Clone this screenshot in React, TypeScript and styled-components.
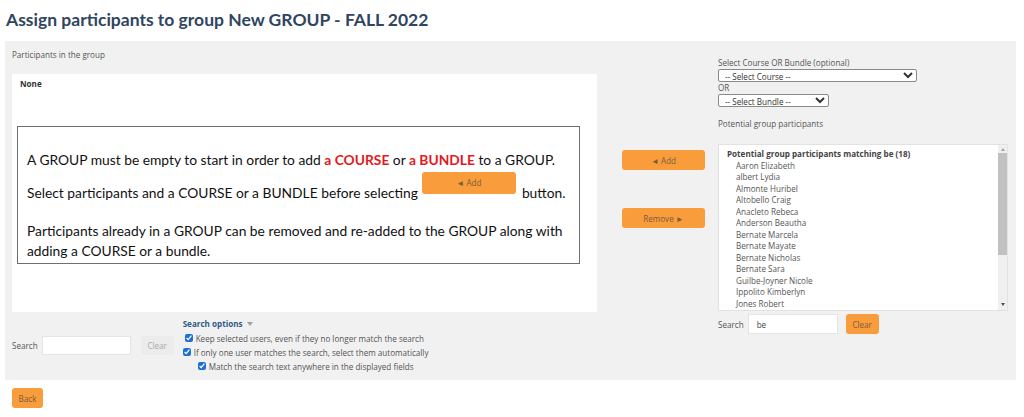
import styled, { createGlobalStyle } from 'styled-components';

const GlobalStyle = createGlobalStyle`
  body {
    margin: 0;
    background: #fff;
    font-family: "Open Sans", "Noto Sans", sans-serif;
    color: #4a4a4a;
  }
  * { box-sizing: border-box; }
`;

const Page = styled.div`
  width: 1024px;
  padding: 9px 8px 0 5px;
`;

const Title = styled.h2`
  margin: 0 0 10px 1px;
  font-family: Lato, "Open Sans", sans-serif;
  font-size: 17.5px;
  line-height: 22px;
  font-weight: 700;
  color: #2f4560;
`;

const Panel = styled.div`
  display: flex;
  align-items: flex-start;
  background: #f1f1f1;
  height: 339px;
  padding: 0 8px 0 7px;
  font-size: 8.1px;
`;

const LeftCol = styled.div`
  width: 585px;
  display: flex;
  flex-direction: column;
`;

const Label = styled.div<{ $top?: number }>`
  line-height: 12px;
  color: #555;
  margin-top: ${(p) => p.$top ?? 0}px;
`;

const WhiteBox = styled.div`
  margin-top: 13px;
  height: 238px;
  background: #fff;
  padding: 4px 8px;
`;

const NoneText = styled.div`
  line-height: 12px;
  font-weight: 700;
  color: #333;
`;

const Notice = styled.div`
  margin: 36px 0 0 -3px;
  width: 563px;
  height: 138px;
  border: 1px solid #6f6f6f;
  padding: 23px 6px 0 9px;
  font-family: Lato, "Open Sans", sans-serif;
  font-size: 13.8px;
  color: #111;
`;

const NoticeLine = styled.p<{ $gap: number }>`
  margin: 0 0 ${(p) => p.$gap}px;
  line-height: 20px;
`;

const Red = styled.strong`
  color: #e3191c;
`;

const OrangeButton = styled.button<{ $w: number; $h?: number }>`
  width: ${(p) => p.$w}px;
  height: ${(p) => p.$h ?? 20}px;
  background: #f99c3b;
  border: none;
  border-radius: 3px;
  color: #7b5c3e;
  font-family: "Open Sans", "Noto Sans", sans-serif;
  font-size: 8.1px;
  padding: 0;
  cursor: pointer;
`;

const InlineButton = styled(OrangeButton)`
  margin: -11px 6px 0 4px;
  vertical-align: top;
  padding-bottom: 2px;
`;

const MiddleCol = styled.div`
  width: 83px;
  margin-left: 25px;
  padding-top: 109px;
  display: flex;
  flex-direction: column;
  gap: 38px;
`;

const RightCol = styled.div`
  width: 290px;
  margin-left: 13px;
  padding-top: 16px;
  display: flex;
  flex-direction: column;
  align-items: flex-start;
`;

const Select = styled.select<{ $w: number }>`
  width: ${(p) => p.$w}px;
  height: 13px;
  font-family: "Open Sans", "Noto Sans", sans-serif;
  font-size: 8.1px;
  color: #333;
  border: 1px solid #8a8a8a;
  border-radius: 2px;
  background: #fff;
  padding: 0 2px;
`;

const ListBox = styled.div`
  margin-top: 14px;
  width: 290px;
  height: 167px;
  background: #fff;
  border: 1px solid #e2e2e2;
  display: flex;
`;

const ListContent = styled.div`
  flex: 1;
  overflow: hidden;
  padding: 3px 8px;
`;

const ScrollTrack = styled.div`
  width: 9px;
  background: #f0f0f0;
  display: flex;
  flex-direction: column;
  align-items: center;
`;

const ScrollArrow = styled.div<{ $down?: boolean }>`
  width: 0;
  height: 0;
  margin: ${(p) => (p.$down ? 'auto 0 4px' : '3px 0 2px')};
  border-left: 2.5px solid transparent;
  border-right: 2.5px solid transparent;
  ${(p) =>
    p.$down ? 'border-top: 3px solid #505050;' : 'border-bottom: 3px solid #a3a3a3;'}
`;

const ScrollThumb = styled.div`
  width: 9px;
  height: 102px;
  background: #c1c1c1;
`;

const GroupHead = styled.div`
  line-height: 11.5px;
  font-weight: 700;
  color: #444;
`;

const Option = styled.div`
  line-height: 11.5px;
  color: #555;
  padding-left: 9px;
`;

const SearchRow = styled.div<{ $top: number }>`
  display: flex;
  align-items: center;
  margin-top: ${(p) => p.$top}px;
  color: #555;
`;

const SearchInput = styled.input<{ $w: number; $h: number }>`
  width: ${(p) => p.$w}px;
  height: ${(p) => p.$h}px;
  margin-left: 4px;
  border: 1px solid #e4e4e4;
  background: #fff;
  font-family: "Open Sans", "Noto Sans", sans-serif;
  font-size: 8.1px;
  color: #444;
  padding: 0 8px;
  outline: none;
`;

const GreyButton = styled.button`
  width: 33px;
  height: 19px;
  margin-left: 10px;
  background: #ececec;
  border: none;
  border-radius: 2px;
  color: #aaa;
  font-family: "Open Sans", "Noto Sans", sans-serif;
  font-size: 8.1px;
  padding: 0;
`;

const Options = styled.div`
  margin-left: 9px;
  display: flex;
  flex-direction: column;
`;

const OptionsLink = styled.div`
  font-weight: 700;
  color: #2f5b87;
  line-height: 12px;
  margin-bottom: 1px;
`;

const Caret = styled.span`
  display: inline-block;
  margin-left: 4px;
  border-left: 3.5px solid transparent;
  border-right: 3.5px solid transparent;
  border-top: 4px solid #9aa0a6;
  vertical-align: 1px;
`;

const CheckRow = styled.label<{ $indent: number }>`
  display: flex;
  align-items: center;
  height: 14px;
  padding-left: ${(p) => p.$indent}px;
  color: #555;
`;

const Check = styled.input`
  width: 8px;
  height: 8px;
  margin: 0 3px 0 0;
  accent-color: #1f6fd1;
`;

const BackButton = styled(OrangeButton)`
  margin: 8px 0 0 7px;
`;

const ClearButton = styled(OrangeButton)`
  margin-left: 8px;
`;

const people = [
  'Aaron Elizabeth',
  'albert Lydia',
  'Almonte Huribel',
  'Altobello Craig',
  'Anacleto Rebeca',
  'Anderson Beautha',
  'Bernate Marcela',
  'Bernate Mayate',
  'Bernate Nicholas',
  'Bernate Sara',
  'Guilbe-Joyner Nicole',
  'Ippolito Kimberlyn',
  'Jones Robert',
  'Jordan Christina',
  'Lambert Nicole',
  'Roberts Bethany',
  'Robertson Daniel',
  'Webber Ashley',
];

const searchOptions = [
  { text: 'Keep selected users, even if they no longer match the search', indent: 2 },
  { text: 'If only one user matches the search, select them automatically', indent: 0 },
  { text: 'Match the search text anywhere in the displayed fields', indent: 15 },
];

export default function App() {
  return (
    <>
      <GlobalStyle />
      <Page>
        <Title>Assign participants to group New GROUP - FALL 2022</Title>
        <Panel>
          <LeftCol>
            <Label $top={8}>Participants in the group</Label>
            <WhiteBox>
              <NoneText>None</NoneText>
              <Notice>
                <NoticeLine $gap={13}>
                  A GROUP must be empty to start in order to add <Red>a COURSE</Red> or{' '}
                  <Red>a BUNDLE</Red> to a GROUP.
                </NoticeLine>
                <NoticeLine $gap={18}>
                  Select participants and a COURSE or a BUNDLE before selecting
                  <InlineButton $w={94} $h={22}>◄ Add</InlineButton>
                  button.
                </NoticeLine>
                <NoticeLine $gap={0}>
                  Participants already in a GROUP can be removed and re-added to the GROUP along
                  with adding a COURSE or a bundle.
                </NoticeLine>
              </Notice>
            </WhiteBox>
            <SearchRow $top={6}>
              Search
              <SearchInput $w={89} $h={19} />
              <GreyButton>Clear</GreyButton>
              <Options>
                <OptionsLink>
                  Search options
                  <Caret />
                </OptionsLink>
                {searchOptions.map((o) => (
                  <CheckRow key={o.text} $indent={o.indent}>
                    <Check type="checkbox" defaultChecked />
                    {o.text}
                  </CheckRow>
                ))}
              </Options>
            </SearchRow>
          </LeftCol>
          <MiddleCol>
            <OrangeButton $w={83}>◄ Add</OrangeButton>
            <OrangeButton $w={83}>Remove ►</OrangeButton>
          </MiddleCol>
          <RightCol>
            <Label>Select Course OR Bundle (optional)</Label>
            <Select $w={199}>
              <option>-- Select Course --</option>
            </Select>
            <Label>OR</Label>
            <Select $w={111}>
              <option>-- Select Bundle --</option>
            </Select>
            <Label $top={11}>Potential group participants</Label>
            <ListBox>
              <ListContent>
                <GroupHead>Potential group participants matching be (18)</GroupHead>
                {people.map((p) => (
                  <Option key={p}>{p}</Option>
                ))}
              </ListContent>
              <ScrollTrack>
                <ScrollArrow />
                <ScrollThumb />
                <ScrollArrow $down />
              </ScrollTrack>
            </ListBox>
            <SearchRow $top={3}>
              Search
              <SearchInput $w={90} $h={20} defaultValue="be" />
              <ClearButton $w={33}>Clear</ClearButton>
            </SearchRow>
          </RightCol>
        </Panel>
        <BackButton $w={31}>Back</BackButton>
      </Page>
    </>
  );
}
